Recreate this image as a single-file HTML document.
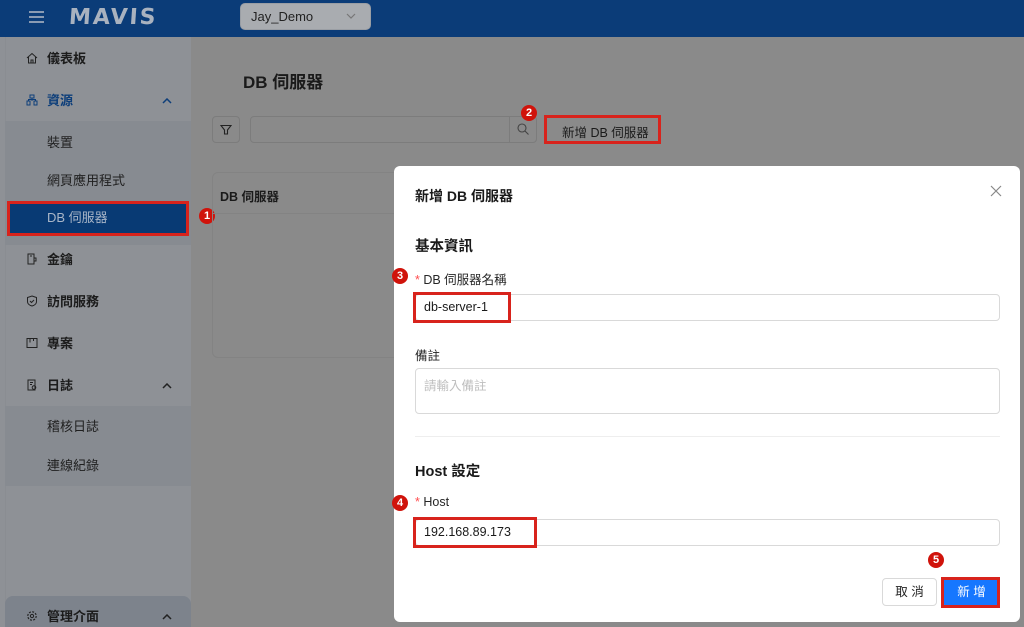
<!DOCTYPE html>
<html><head><meta charset="utf-8">
<style>
*{box-sizing:border-box;margin:0;padding:0}
body{width:1024px;height:627px;overflow:hidden;position:relative;background:#8a8a8a;font-family:"Liberation Sans","Noto Sans CJK TC",sans-serif;color:#1a1a1a}
.abs{position:absolute}
.hdr{left:0;top:0;width:1024px;height:37px;background:#0b3c78}
.side{left:0;top:37px;width:191px;height:590px;background:#8e9196}
.sub{background:#878b91}
.mi{position:absolute;left:47px;font-size:13px;font-weight:bold;color:#1c1c1c;line-height:16px}
.si{position:absolute;left:47px;font-size:13px;color:#1f1f1f;line-height:16px}
.ico{position:absolute;left:26px;width:12px;height:12px}
.badge{position:absolute;width:16px;height:16px;border-radius:50%;background:#d0130b;color:#fff;font-size:11px;font-weight:bold;text-align:center;line-height:16px}
.red{position:absolute;border:3px solid #d8231c}
.modal{left:394px;top:166px;width:626px;height:456px;background:#fff;border-radius:6px}
.inp{position:absolute;border:1px solid #d9d9d9;border-radius:4px;background:#fff}
.lbl{position:absolute;font-size:12.5px;color:#262626}
</style></head><body>
<div class="abs" style="left:0;top:0;width:5px;height:627px;background:#c88a3a"></div>
<div class="abs hdr"></div>
<div class="abs" style="left:29px;top:11px;width:15px;height:2px;background:#8a9bb3;box-shadow:0 5px 0 #8a9bb3,0 10px 0 #8a9bb3"></div>
<div class="abs" style="left:69px;top:5px;font-size:22px;font-weight:bold;color:#a9b2bf;letter-spacing:2px;font-family:'DejaVu Sans',sans-serif;transform:skewX(-4deg)">MAVIS</div>
<div class="abs" style="left:240px;top:3px;width:131px;height:27px;background:#a9acb0;border-radius:5px;border:1px solid #9a9ea4"></div>
<div class="abs" style="left:251px;top:9px;font-size:13px;color:#222">Jay_Demo</div>
<svg class="abs" style="left:346px;top:13px" width="10" height="7"><path d="M1 1l4 4 4-4" stroke="#777" fill="none" stroke-width="1.2"/></svg>

<div class="abs side"></div>
<div class="abs" style="left:5px;top:37px;width:1px;height:590px;background:#8a8d92"></div>
<div class="abs sub" style="left:5px;top:121px;width:186px;height:124px"></div>
<div class="abs sub" style="left:5px;top:406px;width:186px;height:80px"></div>
<div class="abs" style="left:5px;top:596px;width:186px;height:31px;background:#7d838c;border-radius:8px 8px 0 0"></div>

<svg class="ico" style="top:52px" viewBox="0 0 12 12"><path d="M1 6L6 1.5 11 6M2.5 5v6h7V5M5 11V8h2v3" stroke="#222" fill="none" stroke-width="1"/></svg>
<div class="mi" style="top:51px">儀表板</div>
<svg class="ico" style="top:94px" viewBox="0 0 12 12"><path d="M4 1h4v3H4zM1 7h3v4H1zM8 7h3v4H8zM6 4v3M2.5 7V5.5h7V7" stroke="#0d3e7a" fill="none" stroke-width="1"/></svg>
<div class="mi" style="top:93px;color:#0d3e7a">資源</div>
<svg class="abs" style="left:162px;top:98px" width="10" height="6"><path d="M1 5l4-4 4 4" stroke="#0d3e7a" fill="none" stroke-width="1.5"/></svg>
<div class="si" style="top:135px">裝置</div>
<div class="si" style="top:173px">網頁應用程式</div>
<div class="abs" style="left:9px;top:203px;width:177px;height:30px;background:#083a74"></div>
<div class="si" style="top:210px;color:#a9b6c8">DB 伺服器</div>
<div class="red" style="left:7px;top:201px;width:182px;height:35px"></div>
<div class="badge" style="left:199px;top:208px">1</div>

<svg class="ico" style="top:253px" viewBox="0 0 12 12"><path d="M2 1h6v10H2zM8 5h2v3H8M4 3h2" stroke="#222" fill="none" stroke-width="1"/></svg>
<div class="mi" style="top:252px">金鑰</div>
<svg class="ico" style="top:295px" viewBox="0 0 12 12"><path d="M6 1l4.5 1.5v4C10.5 9 8 10.5 6 11 4 10.5 1.5 9 1.5 6.5v-4zM4 6l1.5 1.5L8 5" stroke="#222" fill="none" stroke-width="1"/></svg>
<div class="mi" style="top:294px">訪問服務</div>
<svg class="ico" style="top:337px" viewBox="0 0 12 12"><path d="M1 1.5h10v9H1zM4 1.5v4M7.5 1.5v2.5" stroke="#222" fill="none" stroke-width="1"/></svg>
<div class="mi" style="top:336px">專案</div>
<svg class="ico" style="top:379px" viewBox="0 0 12 12"><path d="M2 1h7v10H2zM4 3.5h3M4 5.5h2" stroke="#222" fill="none" stroke-width="1"/><circle cx="8" cy="8.5" r="1.8" stroke="#222" fill="none"/></svg>
<div class="mi" style="top:378px">日誌</div>
<svg class="abs" style="left:162px;top:383px" width="10" height="6"><path d="M1 5l4-4 4 4" stroke="#222" fill="none" stroke-width="1.5"/></svg>
<div class="si" style="top:419px">稽核日誌</div>
<div class="si" style="top:458px">連線紀錄</div>
<svg class="ico" style="top:610px" viewBox="0 0 12 12"><circle cx="6" cy="6" r="4.2" stroke="#222" fill="none" stroke-width="1.2" stroke-dasharray="2 1.3"/><circle cx="6" cy="6" r="1.6" stroke="#222" fill="none"/></svg>
<div class="mi" style="top:609px">管理介面</div>
<svg class="abs" style="left:162px;top:614px" width="10" height="6"><path d="M1 5l4-4 4 4" stroke="#222" fill="none" stroke-width="1.5"/></svg>

<div class="abs" style="left:243px;top:68px;font-size:17px;font-weight:bold;color:#1a1a1a">DB 伺服器</div>
<div class="abs" style="left:212px;top:116px;width:28px;height:27px;border:1px solid #7c7c7c;border-radius:4px"></div>
<svg class="abs" style="left:220px;top:124px" width="12" height="12" viewBox="0 0 12 12"><path d="M1 1.5h10L7.5 6v4h-3V6z" stroke="#222" fill="none" stroke-width="1.1"/></svg>
<div class="abs" style="left:250px;top:116px;width:287px;height:27px;border:1px solid #7c7c7c;border-radius:4px"></div>
<div class="abs" style="left:509px;top:116px;width:1px;height:27px;background:#7c7c7c"></div>
<svg class="abs" style="left:516px;top:122px" width="14" height="14" viewBox="0 0 14 14"><circle cx="6" cy="6" r="4" stroke="#444" fill="none" stroke-width="1.1"/><path d="M9 9l3.5 3.5" stroke="#444" stroke-width="1.1"/></svg>
<div class="abs" style="left:546px;top:118px;width:113px;height:24px"></div>
<div class="abs" style="left:562px;top:122px;font-size:12.5px;color:#1a1a1a">新增 DB 伺服器</div>
<div class="red" style="left:544px;top:115px;width:117px;height:29px"></div>
<div class="badge" style="left:521px;top:105px">2</div>

<div class="abs" style="left:212px;top:172px;width:200px;height:186px;border:1px solid #838383;border-radius:6px"></div>
<div class="abs" style="left:213px;top:213px;width:199px;height:1px;background:#838383"></div>
<div class="abs" style="left:220px;top:186px;font-size:12.5px;font-weight:bold;color:#1a1a1a">DB 伺服器</div>

<div class="abs modal"></div>
<div class="abs" style="left:415px;top:186px;font-size:14px;font-weight:bold;color:#1a1a1a">新增 DB 伺服器</div>
<svg class="abs" style="left:990px;top:185px" width="12" height="12"><path d="M1 1l10 10M11 1L1 11" stroke="#888" stroke-width="1.2"/></svg>
<div class="abs" style="left:415px;top:235px;font-size:14.5px;font-weight:bold;color:#1a1a1a">基本資訊</div>
<div class="lbl" style="left:415px;top:269px"><span style="color:#ff4d4f">*</span> DB 伺服器名稱</div>
<div class="badge" style="left:392px;top:268px">3</div>
<div class="inp" style="left:415px;top:294px;width:585px;height:27px"></div>
<div class="abs" style="left:424px;top:300px;font-size:12.5px;color:#1a1a1a">db-server-1</div>
<div class="red" style="left:413px;top:292px;width:98px;height:31px"></div>
<div class="lbl" style="left:415px;top:345px">備註</div>
<div class="inp" style="left:415px;top:368px;width:585px;height:46px"></div>
<div class="abs" style="left:424px;top:375px;font-size:12.5px;color:#bfbfbf">請輸入備註</div>
<div class="abs" style="left:415px;top:436px;width:585px;height:1px;background:#eee"></div>
<div class="abs" style="left:415px;top:460px;font-size:14.5px;font-weight:bold;color:#1a1a1a">Host 設定</div>
<div class="lbl" style="left:415px;top:495px"><span style="color:#ff4d4f">*</span> Host</div>
<div class="badge" style="left:392px;top:495px">4</div>
<div class="inp" style="left:415px;top:519px;width:585px;height:27px"></div>
<div class="abs" style="left:424px;top:525px;font-size:12.5px;color:#1a1a1a">192.168.89.173</div>
<div class="red" style="left:413px;top:517px;width:124px;height:31px"></div>
<div class="badge" style="left:928px;top:552px">5</div>
<div class="abs" style="left:882px;top:578px;width:55px;height:28px;border:1px solid #d9d9d9;border-radius:4px;font-size:12.5px;text-align:center;line-height:26px;color:#222">取 消</div>
<div class="abs" style="left:943px;top:578px;width:57px;height:28px;background:#1677ff;border-radius:4px;font-size:12.5px;text-align:center;line-height:28px;color:#fff">新 增</div>
<div class="red" style="left:941px;top:577px;width:59px;height:31px"></div>
</body></html>
